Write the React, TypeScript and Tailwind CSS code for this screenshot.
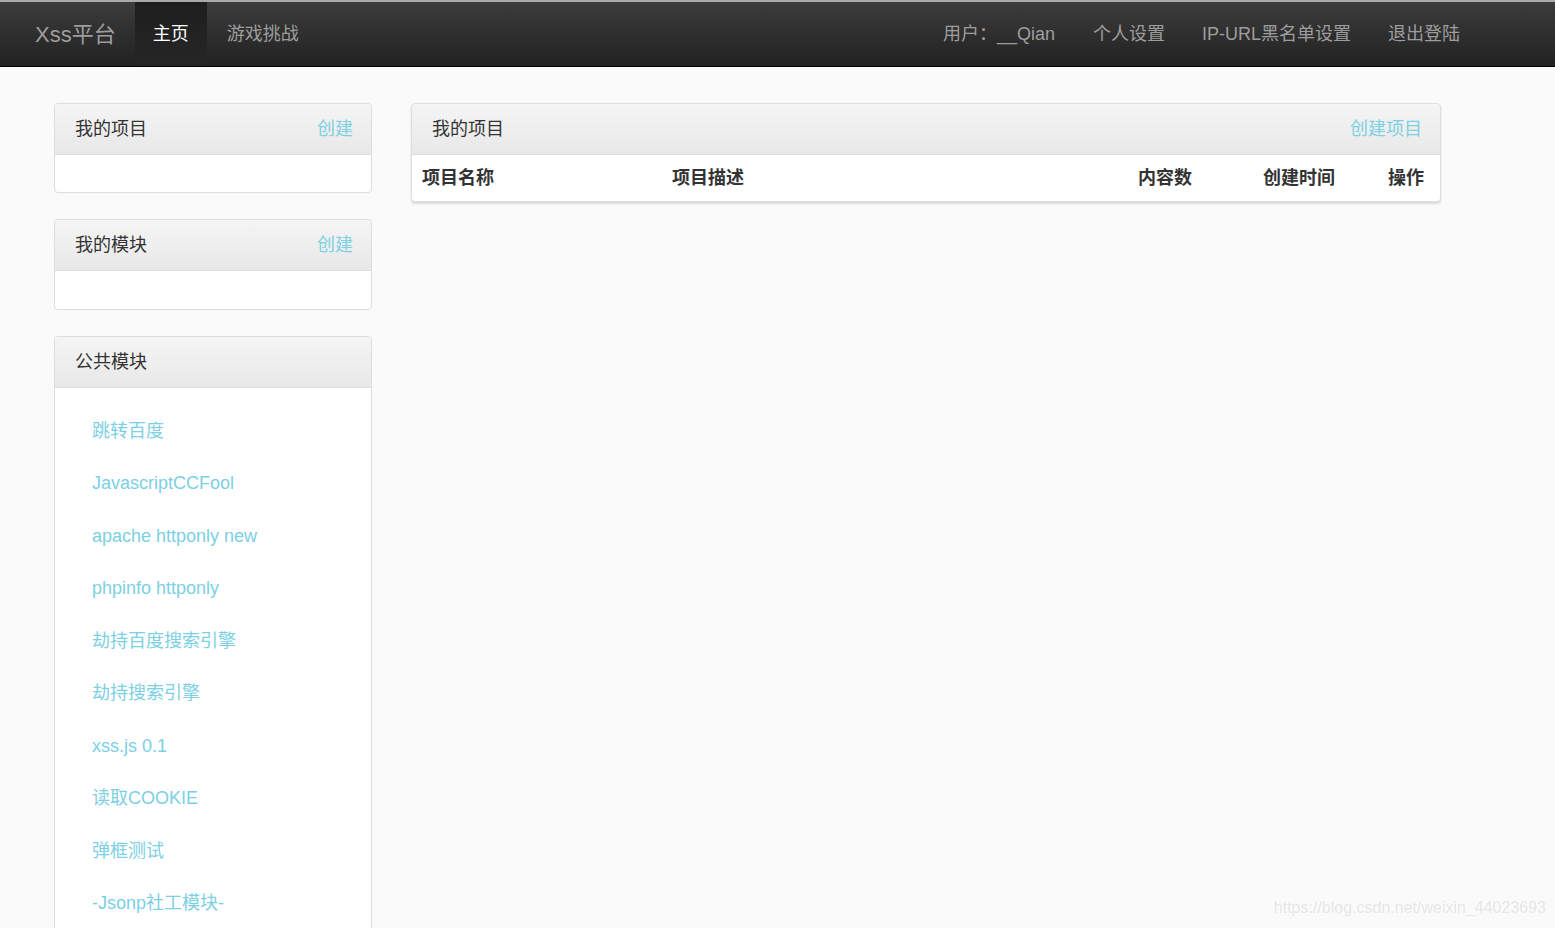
const font = {
  fontFamily: '"Liberation Sans", Arial, "Noto Sans CJK SC", sans-serif',
};

const publicModules = [
  "跳转百度",
  "JavascriptCCFool",
  "apache httponly new",
  "phpinfo httponly",
  "劫持百度搜索引擎",
  "劫持搜索引擎",
  "xss.js 0.1",
  "读取COOKIE",
  "弹框测试",
  "-Jsonp社工模块-",
];

function PanelHeader({ title, action }: { title: string; action?: string }) {
  return (
    <div className="flex h-[51px] items-center justify-between border-b border-[#dddddd] bg-gradient-to-b from-[#f5f5f5] to-[#e8e8e8] pl-[20px] pr-[18px] rounded-t-[4px]">
      <span className="text-[18px] text-[#333333]">{title}</span>
      {action && <a className="text-[18px] text-[#7cd0e4] cursor-pointer">{action}</a>}
    </div>
  );
}

function NavBar() {
  return (
    <div className="border-t-2 border-[#a9a9a9]">
      <div className="flex h-[65px] items-stretch border-b border-black bg-gradient-to-b from-[#3c3c3c] to-[#222222] pl-[35px]">
        <a className="flex items-center pr-[19px] text-[22px] text-[#9d9d9d]">Xss平台</a>
        <a className="flex items-center bg-gradient-to-b from-[#1e1e1e] to-[#262626] px-[18px] text-[18px] text-white">
          主页
        </a>
        <a className="flex items-center px-[20px] text-[18px] text-[#9d9d9d]">游戏挑战</a>
        <div className="ml-auto flex items-stretch pr-[76px]">
          <span className="flex items-center px-[19px] text-[18px] text-[#9d9d9d]">用户：__Qian</span>
          <a className="flex items-center px-[19px] text-[18px] text-[#9d9d9d]">个人设置</a>
          <a className="flex items-center px-[18px] text-[18px] text-[#9d9d9d]">IP-URL黑名单设置</a>
          <a className="flex items-center px-[19px] text-[18px] text-[#9d9d9d]">退出登陆</a>
        </div>
      </div>
    </div>
  );
}

export default function App() {
  return (
    <div className="min-h-screen bg-[#fafafa]" style={font}>
      <NavBar />
      <div className="flex items-start gap-[39px] pl-[54px] pt-[36px]">
        <div className="flex w-[318px] flex-col gap-[26px]">
          <div className="rounded-[4px] border border-[#dddddd] bg-white">
            <PanelHeader title="我的项目" action="创建" />
            <div className="h-[37px]" />
          </div>
          <div className="rounded-[4px] border border-[#dddddd] bg-white">
            <PanelHeader title="我的模块" action="创建" />
            <div className="h-[38px]" />
          </div>
          <div className="rounded-[4px] border border-[#dddddd] bg-white">
            <PanelHeader title="公共模块" />
            <ul className="pl-[37px] pt-[17px] pb-[10px]">
              {publicModules.map((m) => (
                <li key={m} className="flex h-[52.5px] items-center">
                  <a className="text-[18px] text-[#7cd0e4] cursor-pointer">{m}</a>
                </li>
              ))}
            </ul>
          </div>
        </div>

        <div className="w-[1030px] rounded-[4px] border border-[#dddddd] bg-white shadow-[0_2px_2px_rgba(0,0,0,0.12)]">
          <PanelHeader title="我的项目" action="创建项目" />
          <div className="grid h-[46px] grid-cols-[250px_466px_125px_125px_1fr] items-center pl-[10px] text-[18px] font-bold text-[#333333]">
            <span>项目名称</span>
            <span>项目描述</span>
            <span>内容数</span>
            <span>创建时间</span>
            <span>操作</span>
          </div>
        </div>
      </div>

      <div className="fixed bottom-[8px] right-[9px] text-[16px] text-[#e6e6e6]">
        https://blog.csdn.net/weixin_44023693
      </div>
    </div>
  );
}
